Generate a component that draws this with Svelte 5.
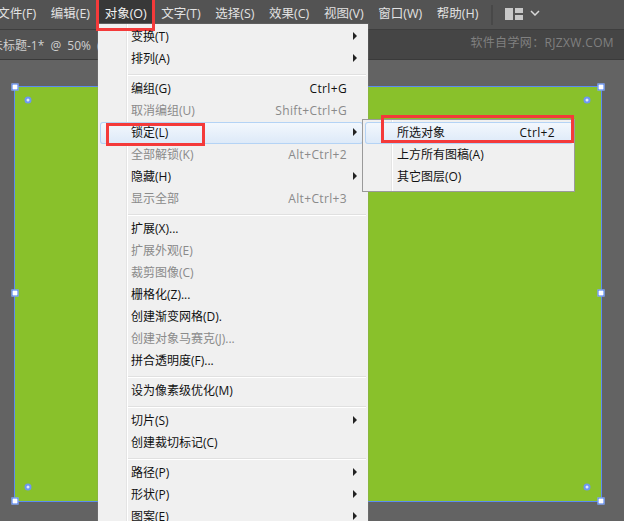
<script>
  const bar = ['文件(F)', '编辑(E)', '对象(O)', '文字(T)', '选择(S)', '效果(C)', '视图(V)', '窗口(W)', '帮助(H)'];
  const groups = [
    [{ t: '变换(T)', sub: 1 }, { t: '排列(A)', sub: 1 }],
    [
      { t: '编组(G)', k: 'Ctrl+G' },
      { t: '取消编组(U)', k: 'Shift+Ctrl+G', off: 1 },
      { t: '锁定(L)', sub: 1, hot: 1 },
      { t: '全部解锁(K)', k: 'Alt+Ctrl+2', off: 1 },
      { t: '隐藏(H)', sub: 1 },
      { t: '显示全部', k: 'Alt+Ctrl+3', off: 1 }
    ],
    [
      { t: '扩展(X)...' },
      { t: '扩展外观(E)', off: 1 },
      { t: '裁剪图像(C)', off: 1 },
      { t: '栅格化(Z)...' },
      { t: '创建渐变网格(D).' },
      { t: '创建对象马赛克(J)...', off: 1 },
      { t: '拼合透明度(F)...' }
    ],
    [{ t: '设为像素级优化(M)' }],
    [{ t: '切片(S)', sub: 1 }, { t: '创建裁切标记(C)' }],
    [{ t: '路径(P)', sub: 1 }, { t: '形状(P)', sub: 1 }, { t: '图案(E)', sub: 1 }]
  ];
  const subItems = [
    { t: '所选对象', k: 'Ctrl+2', hot: 1 },
    { t: '上方所有图稿(A)' },
    { t: '其它图层(O)' }
  ];
  const handles = ['tl', 'tr', 'ml', 'mr', 'bl', 'br'];
  const rings = ['r1', 'r2', 'r3', 'r4'];
</script>

<div class="app">
  <header class="menubar">
    {#each bar as b, i}
      <span class="baritem" class:active={i === 2}>{b}</span>
    {/each}
    <span class="barsep"></span>
    <svg class="layout" width="18" height="12" viewBox="0 0 18 12">
      <rect x="0" y="0" width="8" height="12" fill="#c8c8c8" />
      <rect x="10" y="0" width="8" height="5" fill="#c8c8c8" />
      <rect x="10" y="7" width="8" height="5" fill="#c8c8c8" />
    </svg>
    <svg class="chev" width="10" height="6" viewBox="0 0 10 6">
      <path d="M1 1l4 4 4-4" fill="none" stroke="#d8d8d8" stroke-width="1.5" />
    </svg>
  </header>

  <div class="tabbar">
    <span class="tab">未标题-1* @ 50% (</span>
    <span class="mark">软件自学网：RJZXW.COM</span>
  </div>

  <main class="canvas">
    <div class="artboard">
      {#each handles as h}<span class="handle {h}"></span>{/each}
      {#each rings as r}<span class="ring {r}"></span>{/each}
    </div>
  </main>

  <nav class="menu">
    {#each groups as g, gi}
      {#if gi > 0}<div class="sep"></div>{/if}
      {#each g as it}
        <div class="row" class:off={it.off} class:hot={it.hot}>
          <span class="label">{it.t}</span>
          {#if it.k}<span class="key">{it.k}</span>{/if}
          {#if it.sub}<span class="arrow"></span>{/if}
        </div>
      {/each}
    {/each}
  </nav>

  <nav class="submenu">
    {#each subItems as it}
      <div class="row" class:hot={it.hot}>
        <span class="label">{it.t}</span>
        {#if it.k}<span class="key">{it.k}</span>{/if}
      </div>
    {/each}
  </nav>

  <span class="mark-box b1"></span>
  <span class="mark-box b2"></span>
  <span class="mark-box b3"></span>
</div>

<style>
  :global(body) {
    margin: 0;
  }
  .app {
    position: relative;
    width: 624px;
    height: 521px;
    overflow: hidden;
    display: flex;
    flex-direction: column;
    background: #636363;
    font-family: "Open Sans", "Noto Sans CJK SC", sans-serif;
    font-size: 12px;
  }
  .menubar {
    height: 29px;
    flex: none;
    display: flex;
    align-items: flex-start;
    background: #535353;
    border-bottom: 1px solid #3e3e3e;
    color: #e2e2e2;
    margin-left: -10px;
    width: 634px;
    font-size: 12.5px;
  }
  .baritem {
    height: 23px;
    line-height: 28px;
    padding: 0 7.3px;
    white-space: nowrap;
  }
  .baritem.active {
    background: #383838;
    color: #f2f2f2;
  }
  .barsep {
    width: 2px;
    height: 20px;
    margin: 5px 12px 0 5px;
    background: #484848;
  }
  .layout {
    margin-top: 8px;
  }
  .chev {
    margin: 10px 0 0 7px;
  }
  .tabbar {
    height: 29px;
    flex: none;
    display: flex;
    justify-content: space-between;
    align-items: center;
    background: linear-gradient(90deg, #535353 0 98px, #454545 98px);
    border-bottom: 1px solid #3a3a3a;
  }
  .tab {
    margin-left: -9px;
    color: #d0d0d0;
    white-space: nowrap;
    font-size: 12px;
    word-spacing: 3px;
  }
  .mark {
    margin: 0 10px 5px 0;
    color: #808080;
    font-size: 12px;
    letter-spacing: 0.35px;
  }
  .canvas {
    flex: 1;
    padding: 27px 0 0 15px;
    background: #636363;
  }
  .artboard {
    position: relative;
    width: 586px;
    height: 414px;
    background: #89c12b;
    box-shadow: 0 0 0 1px #5b8cf0;
  }
  .handle {
    position: absolute;
    width: 5px;
    height: 5px;
    background: #fff;
    border: 1px solid #3f74ef;
    transform: translate(-50%, -50%);
  }
  .tl { left: 0; top: 0; }
  .tr { left: 100%; top: 0; }
  .ml { left: 0; top: 206px; }
  .mr { left: 100%; top: 206px; }
  .bl { left: 0; top: 100%; }
  .br { left: 100%; top: 100%; }
  .ring {
    position: absolute;
    width: 3px;
    height: 3px;
    border: 2px solid #6d97f2;
    border-radius: 50%;
    background: #dfe8fb;
    transform: translate(-50%, -50%);
  }
  .r1 { left: 13px; top: 13px; }
  .r2 { left: 572px; top: 13px; }
  .r3 { left: 13px; top: 400px; }
  .r4 { left: 572px; top: 400px; }
  .menu {
    position: absolute;
    left: 98px;
    top: 24px;
    width: 270px;
    padding-top: 1px;
    background: linear-gradient(90deg, #f0f0f0 0 28px, #e4e4e4 28px 29px, #fff 29px 30px, #f0f0f0 30px);
    box-shadow: 0 0 0 1px #8c8c8c33;
    color: #111;
  }
  .row {
    position: relative;
    box-sizing: border-box;
    height: 22px;
    display: flex;
    align-items: center;
    padding-left: 33px;
    line-height: 22px;
    white-space: nowrap;
  }
  .menu .row {
    padding-top: 2px;
  }
  .row.off {
    color: #8a8a8a;
  }
  .row.hot {
    margin: 0 5px 0 2px;
  }
  .menu .row.hot {
    padding-left: 31px;
  }
  .row.hot::before {
    content: "";
    position: absolute;
    inset: 1px 0 -1px 0;
    border-radius: 3px;
    box-shadow: inset 0 0 0 1px #b4d3f5;
    background: linear-gradient(180deg, #f4f8fd, #dce9f8);
  }
  .label,
  .key {
    z-index: 1;
  }
  .key {
    position: absolute;
    right: 21px;
    letter-spacing: 0.35px;
  }
  .row.hot .key {
    right: 18px;
  }
  .arrow {
    position: absolute;
    z-index: 1;
    right: 11px;
    top: 7px;
    border-left: 4px solid #222;
    border-top: 4px solid transparent;
    border-bottom: 4px solid transparent;
  }
  .row.hot .arrow {
    right: 6px;
  }
  .sep {
    height: 2px;
    margin: 5px 2px 1px 30px;
    background: linear-gradient(180deg, #e0e0e0 50%, #fff 50%);
  }
  .submenu {
    position: absolute;
    left: 362px;
    top: 119px;
    width: 211px;
    padding: 2px 0 3px;
    background: linear-gradient(90deg, #f0f0f0 0 28px, #e4e4e4 28px 29px, #fff 29px 30px, #f0f0f0 30px);
    border: 1px solid #9a9a9a;
    color: #111;
  }
  .submenu .row {
    padding-left: 34px;
  }
  .submenu .row.hot {
    margin: 0 1px 0 2px;
    padding-left: 32px;
  }
  .submenu .row.hot::before {
    inset: 0;
  }
  .mark-box {
    position: absolute;
    box-sizing: border-box;
    border: 3px solid #f43a3a;
  }
  .b1 { left: 96px; top: -4px; width: 59px; height: 35px; }
  .b2 { left: 106px; top: 123px; width: 99px; height: 23px; }
  .b3 { left: 381px; top: 115px; width: 193px; height: 28px; }
</style>
